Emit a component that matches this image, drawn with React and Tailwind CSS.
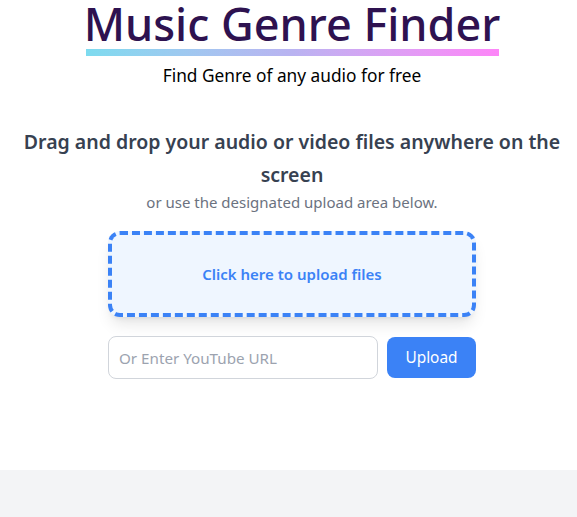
import React from "react";

export default function App() {
  return (
    <div className="min-h-[517px] flex flex-col bg-white" style={{ fontFamily: '"Noto Sans", "Open Sans", sans-serif' }}>
      <main className="flex-1 flex flex-col items-center pl-[7px] pb-[47px]">
        <div className="flex flex-col items-center">
          <h1 className="text-[45px] leading-[48px] font-medium text-[#2e1250]">
            Music Genre Finder
          </h1>
          <div className="mt-[1px] h-[7px] w-[413px] bg-gradient-to-r from-[#7ddbef] via-[#b9b3f1] to-[#fd85f8]" />
          <p className="text-[17.3px] leading-[28px] text-black mt-[6px]">Find Genre of any audio for free</p>
        </div>
        <div className="mt-[35px] flex flex-col items-center text-center px-2">
          <h2 className="text-[19.5px] leading-[33px] font-semibold text-[#374151]">
            Drag and drop your audio or video files anywhere on the screen
          </h2>
          <p className="text-[15px] leading-[22px] text-[#6b7280]">or use the designated upload area below.</p>
        </div>
        <div className="mt-[18px] w-[368px] h-[86px] rounded-xl border-4 border-dashed border-[#3b82f6] bg-[#eff6ff] shadow-lg flex items-center justify-center">
          <span className="text-[15px] font-semibold text-[#3b82f6]">Click here to upload files</span>
        </div>
        <div className="mt-[19px] flex items-center gap-[9px]">
          <input
            type="text"
            placeholder="Or Enter YouTube URL"
            className="w-[270px] h-[43px] rounded-lg border border-[#d1d5db] px-[10px] text-[15.2px] placeholder:text-[#9ca3af] outline-none"
          />
          <button className="w-[89px] h-[41px] rounded-lg bg-[#3b82f6] text-white text-[15.4px]">Upload</button>
        </div>
      </main>
      <footer className="h-[47px] bg-[#f3f4f6]" />
    </div>
  );
}
